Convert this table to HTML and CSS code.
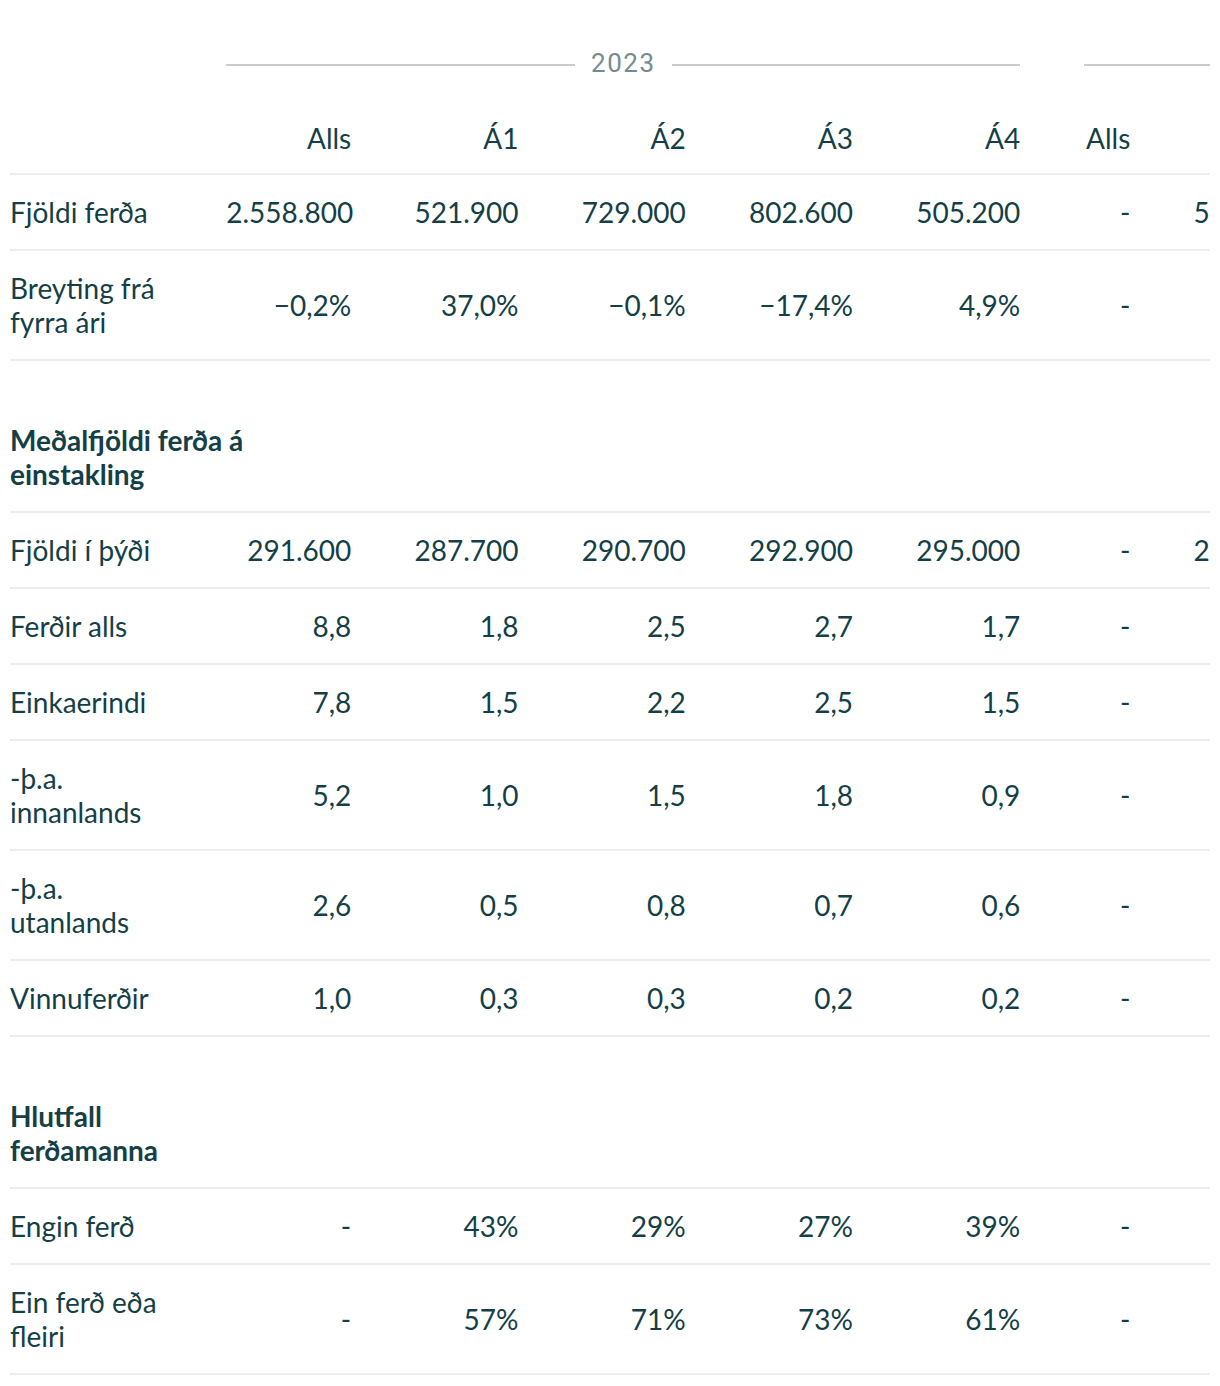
FILE: index.html
```html
<!DOCTYPE html>
<html lang="is">
<head>
<meta charset="utf-8">
<title>Ferðir</title>
<link rel="stylesheet" href="styles.css">
</head>
<body>
<div class="scroller">
<table class="data">
  <colgroup>
    <col class="c-label">
    <col class="c-num"><col class="c-num"><col class="c-num"><col class="c-num"><col class="c-num">
    <col class="c-first2">
    <col class="c-num"><col class="c-num"><col class="c-num"><col class="c-num">
  </colgroup>
  <thead>
    <tr class="year-row">
      <th></th>
      <th colspan="5" class="year"><div class="year-inner"><span class="rule"></span><span class="year-text">2023</span><span class="rule"></span></div></th>
      <th colspan="5" class="year group2"><div class="year-inner"><span class="rule"></span><span class="year-text">2024</span><span class="rule"></span></div></th>
    </tr>
    <tr class="col-row">
      <th></th>
      <th>Alls</th><th>Á1</th><th>Á2</th><th>Á3</th><th>Á4</th>
      <th class="group2">Alls</th><th>Á1</th><th>Á2</th><th>Á3</th><th>Á4</th>
    </tr>
  </thead>
  <tbody>
    <tr>
      <td class="label">Fjöldi ferða</td>
      <td>2.558.800</td><td>521.900</td><td>729.000</td><td>802.600</td><td>505.200</td>
      <td class="group2">-</td><td>548.300</td><td>-</td><td>-</td><td>-</td>
    </tr>
    <tr>
      <td class="label">Breyting frá fyrra ári</td>
      <td>−0,2%</td><td>37,0%</td><td>−0,1%</td><td>−17,4%</td><td>4,9%</td>
      <td class="group2">-</td><td>5,1%</td><td>-</td><td>-</td><td>-</td>
    </tr>
    <tr class="section">
      <th colspan="11"><span class="section-title">Meðalfjöldi ferða á einstakling</span></th>
    </tr>
    <tr>
      <td class="label">Fjöldi í þýði</td>
      <td>291.600</td><td>287.700</td><td>290.700</td><td>292.900</td><td>295.000</td>
      <td class="group2">-</td><td>297.400</td><td>-</td><td>-</td><td>-</td>
    </tr>
    <tr>
      <td class="label">Ferðir alls</td>
      <td>8,8</td><td>1,8</td><td>2,5</td><td>2,7</td><td>1,7</td>
      <td class="group2">-</td><td>1,8</td><td>-</td><td>-</td><td>-</td>
    </tr>
    <tr>
      <td class="label">Einkaerindi</td>
      <td>7,8</td><td>1,5</td><td>2,2</td><td>2,5</td><td>1,5</td>
      <td class="group2">-</td><td>1,6</td><td>-</td><td>-</td><td>-</td>
    </tr>
    <tr>
      <td class="label">-þ.a. innanlands</td>
      <td>5,2</td><td>1,0</td><td>1,5</td><td>1,8</td><td>0,9</td>
      <td class="group2">-</td><td>1,0</td><td>-</td><td>-</td><td>-</td>
    </tr>
    <tr>
      <td class="label">-þ.a. utanlands</td>
      <td>2,6</td><td>0,5</td><td>0,8</td><td>0,7</td><td>0,6</td>
      <td class="group2">-</td><td>0,6</td><td>-</td><td>-</td><td>-</td>
    </tr>
    <tr>
      <td class="label">Vinnuferðir</td>
      <td>1,0</td><td>0,3</td><td>0,3</td><td>0,2</td><td>0,2</td>
      <td class="group2">-</td><td>0,2</td><td>-</td><td>-</td><td>-</td>
    </tr>
    <tr class="section">
      <th colspan="11"><span class="section-title">Hlutfall ferðamanna</span></th>
    </tr>
    <tr>
      <td class="label">Engin ferð</td>
      <td>-</td><td>43%</td><td>29%</td><td>27%</td><td>39%</td>
      <td class="group2">-</td><td>41%</td><td>-</td><td>-</td><td>-</td>
    </tr>
    <tr class="last">
      <td class="label">Ein ferð eða fleiri</td>
      <td>-</td><td>57%</td><td>71%</td><td>73%</td><td>61%</td>
      <td class="group2">-</td><td>59%</td><td>-</td><td>-</td><td>-</td>
    </tr>
  </tbody>
</table>
</div>
</body>
</html>
```

FILE: styles.css
```css
html, body {
  margin: 0;
  padding: 0;
  background: #ffffff;
}

body {
  font-family: Lato, "Noto Sans", sans-serif;
  color: #143f46;
}

.scroller {
  margin: 0 10px;
  width: 1200px;
  overflow: hidden;
}

.data {
  table-layout: fixed;
  border-collapse: collapse;
  border-spacing: 0;
  width: 1789.25px;
  font-size: 28px;
  line-height: 34px;
}

.c-label { width: 174px; }
.c-num { width: 167.25px; }
.c-first2 { width: 110px; }

.data th,
.data td {
  padding: 20px 0 20px 42.25px;
  text-align: right;
  vertical-align: middle;
  font-weight: 400;
  white-space: nowrap;
}

.data .label,
.data tr > th:first-child {
  padding-left: 0;
  text-align: left;
  white-space: normal;
}

.data .group2 {
  padding-left: 64px;
}

.year-row th {
  padding-top: 46px;
  padding-bottom: 21px;
}

.col-row th {
  padding-top: 20px;
  padding-bottom: 18px;
}

.year-inner {
  display: flex;
  align-items: center;
  gap: 16px;
}

.rule {
  flex: 1;
  height: 2px;
  margin-top: 3px;
  background: #cbcbcb;
}

.year-text {
  font-family: Roboto, "Liberation Sans", sans-serif;
  font-size: 26px;
  letter-spacing: 1.5px;
  color: #768b91;
}

tbody tr {
  border-top: 2px solid #ececec;
}

tbody tr.last {
  border-bottom: 2px solid #ececec;
}

.data tr.section th {
  padding: 62px 0 20px 0;
  text-align: left;
  white-space: normal;
}

.section-title {
  display: block;
  max-width: 244px;
  font-weight: 700;
}
```
